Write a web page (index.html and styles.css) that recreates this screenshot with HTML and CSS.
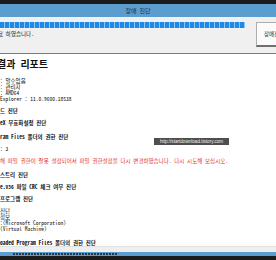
FILE: index.html
```html
<!DOCTYPE html>
<html lang="ko">
<head>
  <meta charset="UTF-8">
  <meta name="viewport" content="width=device-width, initial-scale=1.0">
  <title>장애 진단</title>
  <link rel="stylesheet" href="styles.css">
</head>
<body>
  <div class="window">
    <div class="frame-top"></div>
    <div class="titlebar">장애 진단</div>

    <div class="panel">
      <div class="progress-col">
        <div class="progress"></div>
        <div class="msg">완료 하였습니다.</div>
      </div>
      <button class="diag-btn">장애진단</button>
    </div>

    <div class="report">
      <h1>결과 리포트</h1>

      <div class="info">
        <div class="ln">: 알수없음</div>
        <div class="ln">: 관리자</div>
        <div class="ln">: AMD64</div>
        <div class="ln">Explorer : 11.0.9600.18538</div>
      </div>

      <div class="items">
        <div class="ln b">드 진단</div>
        <div class="ln b">eX 무효화설정 진단</div>
        <div class="ln b more">ram Files 폴더의 권한 진단</div>
        <div class="ln">: 3</div>
        <div class="ln red">해 파일 권한이 잘못 설정되어서 파일 권한설정을 다시 변경하였습니다. 다시 시도해 보십시오.</div>
        <div class="ln b more">스트리 진단</div>
        <div class="ln b">e.v36 파일 CRC 체크 여부 진단</div>
        <div class="ln b">프로그램 진단</div>
        <div class="block">
          <div class="ln">진단</div>
          <div class="ln">정보</div>
          <div class="ln">:(Microsoft Corporation)</div>
          <div class="ln">(Virtual Machine)</div>
        </div>
        <div class="ln b more">oaded Program Files 폴더의 권한 진단</div>
      </div>

      <div class="watermark">http://startdownload.tistory.com</div>
    </div>

    <div class="statusbar"></div>
    <div class="taskbar"><span class="dots"></span></div>
    <div class="frame-bottom"></div>
  </div>
</body>
</html>
```

FILE: styles.css
```css
body {
  margin: 0;
  background-color: #fff;
  font-family: "Noto Sans Mono CJK KR", "Noto Sans CJK KR", "Liberation Mono", monospace;
  color: #111;
}
.window {
  width: 276px;
  height: 260px;
  overflow: hidden;
  display: flex;
  flex-direction: column;
}
.frame-top {
  height: 4px;
  background-color: #1b1b1b;
}
.titlebar {
  height: 13px;
  background-color: #5c9dcf;
  color: #1e2d3d;
  font-size: 6px;
  line-height: 13px;
  text-align: center;
}
.panel {
  height: 37px;
  background-color: #f0f0f0;
  border-bottom: 1px solid #7c7c7c;
  display: flex;
  box-sizing: border-box;
  padding-top: 5px;
}
.progress-col {
  width: 245px;
  flex-shrink: 0;
  overflow: hidden;
}
.progress {
  height: 6px;
  background: repeating-linear-gradient(90deg, #1f8ae6 0 4px, #8fc5ef 4px 5px);
}
.msg {
  margin-top: 3px;
  font-size: 5.5px;
  line-height: 6px;
  text-indent: -7px;
  white-space: nowrap;
}
.diag-btn {
  margin-left: 11px;
  width: 40px;
  height: 25px;
  flex-shrink: 0;
  padding: 0 0 0 7px;
  text-align: left;
  background-color: #fbfbfb;
  border: 1px solid #adadad;
  border-bottom: 2px solid #6f6f6f;
  font-family: inherit;
  font-size: 5.5px;
  color: #222;
}
.report {
  flex: 1;
  position: relative;
  overflow: hidden;
  padding-top: 3px;
  white-space: nowrap;
}
h1 {
  margin: 0;
  font-size: 10px;
  line-height: 14px;
  font-weight: bold;
  text-indent: -3px;
}
.info {
  margin-top: 7px;
}
.ln {
  font-size: 5.5px;
  line-height: 6px;
  height: 6px;
}
.b {
  font-weight: bold;
}
.red {
  color: #e3312b;
}
.items {
  margin-top: 6px;
  display: flex;
  flex-direction: column;
  gap: 6px;
}
.more {
  margin-top: 2px;
}
.watermark {
  position: absolute;
  left: 154px;
  top: 84px;
  width: 75px;
  height: 7px;
  background-color: #4e4e4e;
  color: #f0f0f0;
  font-family: "Liberation Sans", sans-serif;
  font-size: 4.6px;
  line-height: 7px;
  text-align: center;
}
.statusbar {
  height: 6px;
  background-color: #efefef;
  border-top: 1px solid #e2e2e2;
  box-sizing: border-box;
}
.taskbar {
  height: 4px;
  background-color: #5c9dcf;
  padding: 1px 0 0 13px;
  box-sizing: border-box;
}
.dots {
  display: block;
  width: 105px;
  height: 2px;
  background: repeating-linear-gradient(90deg, #2c3744 0 2px, transparent 2px 3px);
}
.frame-bottom {
  height: 4px;
  background-color: #1b1b1b;
}
```
